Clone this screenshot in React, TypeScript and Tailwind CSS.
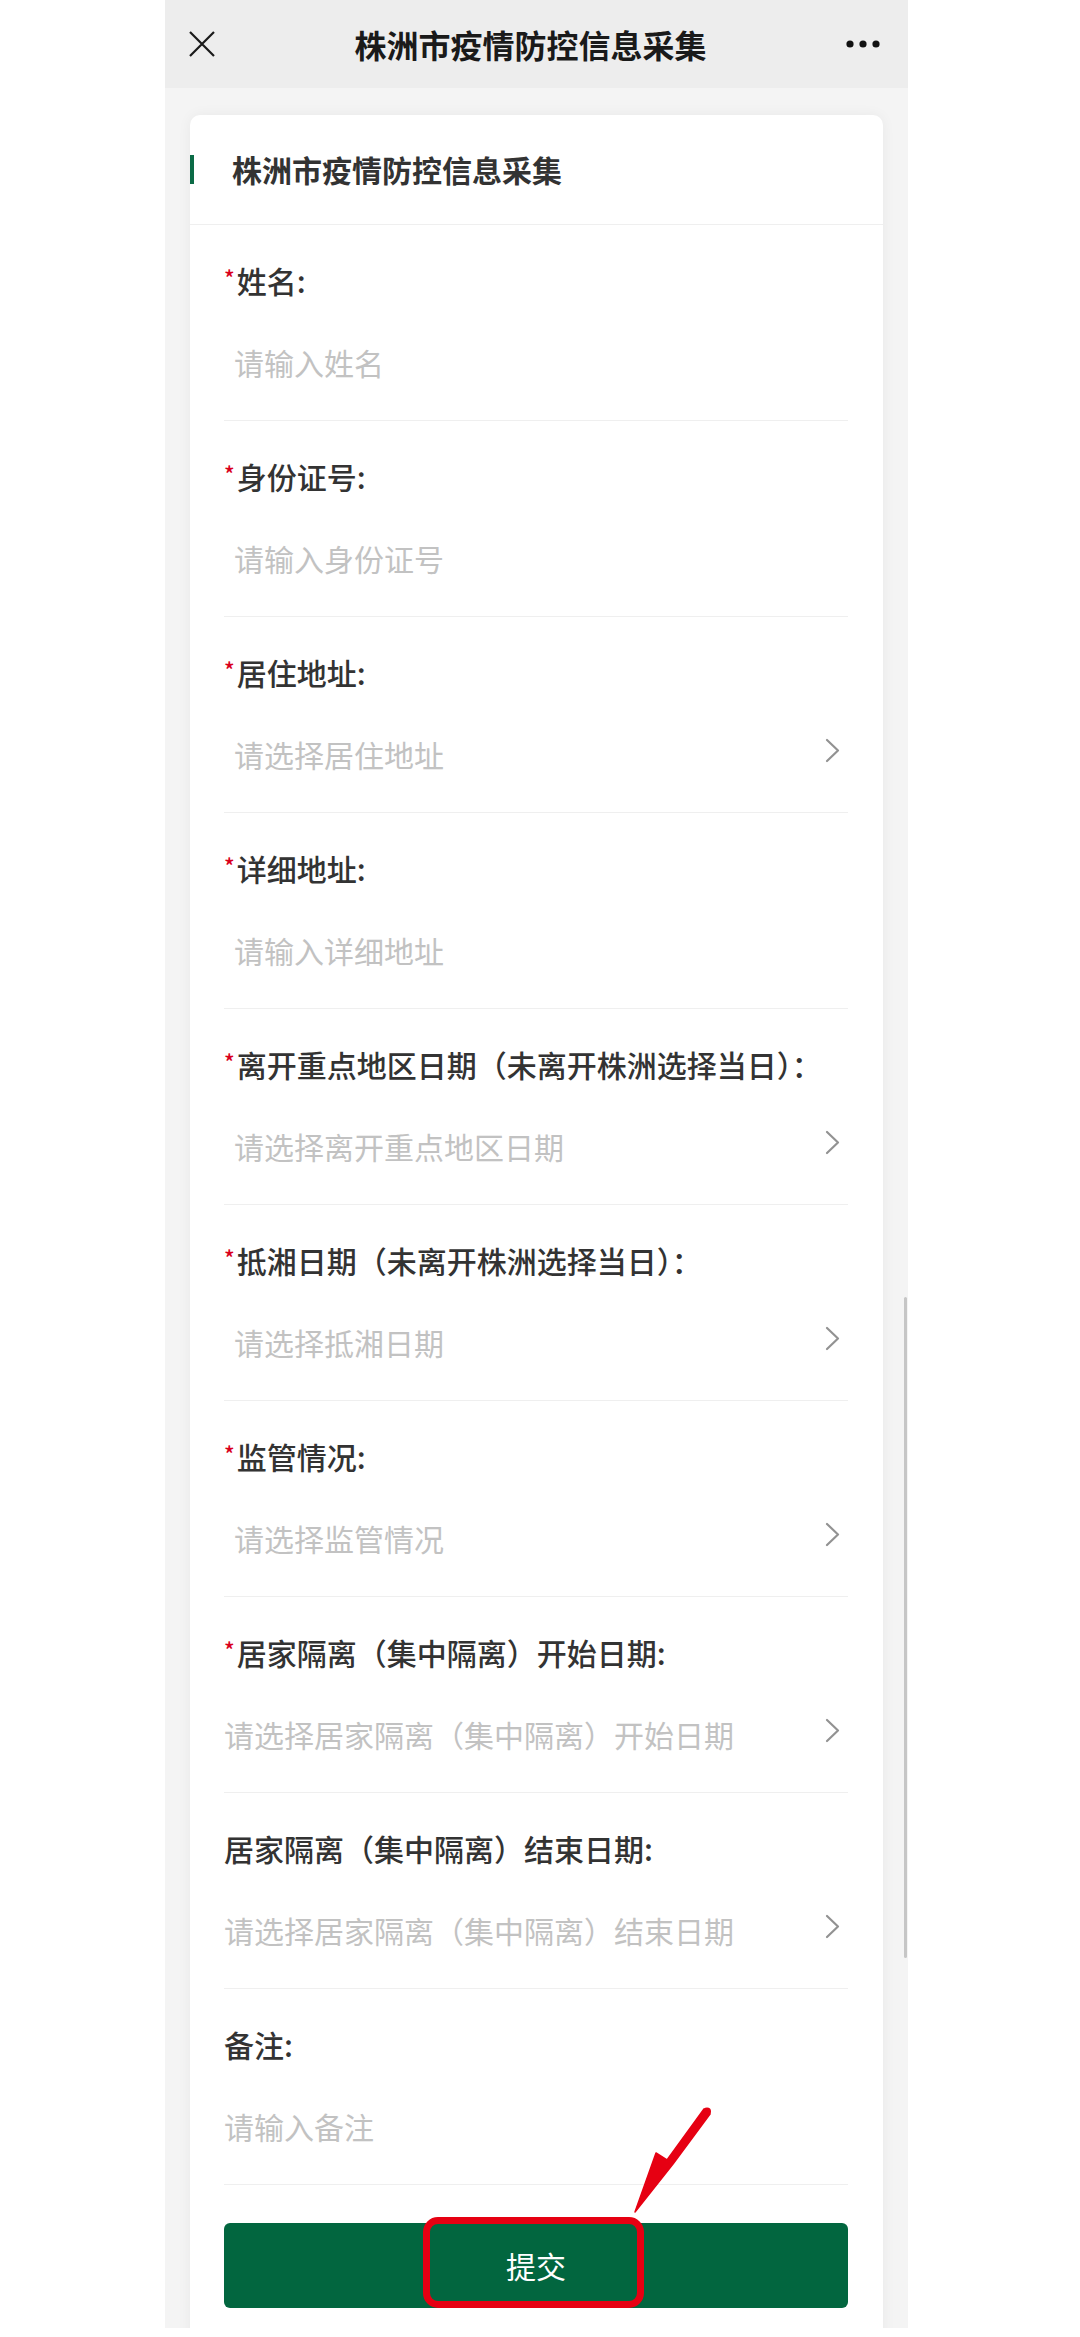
type Field = {
  label: string;
  placeholder: string;
  required?: boolean;
  select?: boolean;
  inset?: boolean;
};

const fields: Field[] = [
  { label: "姓名:", placeholder: "请输入姓名", required: true, inset: true },
  { label: "身份证号:", placeholder: "请输入身份证号", required: true, inset: true },
  { label: "居住地址:", placeholder: "请选择居住地址", required: true, select: true, inset: true },
  { label: "详细地址:", placeholder: "请输入详细地址", required: true, inset: true },
  {
    label: "离开重点地区日期（未离开株洲选择当日）：",
    placeholder: "请选择离开重点地区日期",
    required: true,
    select: true,
    inset: true,
  },
  {
    label: "抵湘日期（未离开株洲选择当日）：",
    placeholder: "请选择抵湘日期",
    required: true,
    select: true,
    inset: true,
  },
  { label: "监管情况:", placeholder: "请选择监管情况", required: true, select: true, inset: true },
  {
    label: "居家隔离（集中隔离）开始日期:",
    placeholder: "请选择居家隔离（集中隔离）开始日期",
    required: true,
    select: true,
  },
  {
    label: "居家隔离（集中隔离）结束日期:",
    placeholder: "请选择居家隔离（集中隔离）结束日期",
    select: true,
  },
  { label: "备注:", placeholder: "请输入备注" },
];

const font = { fontFamily: '"Noto Sans CJK SC", "Noto Sans", sans-serif' };

function Chevron() {
  return (
    <svg width="15" height="25" viewBox="0 0 15 25" className="-translate-y-[4px]">
      <path
        d="M2 2 L13 12.5 L2 23"
        fill="none"
        stroke="#929292"
        strokeWidth="2.2"
        strokeLinecap="round"
        strokeLinejoin="round"
      />
    </svg>
  );
}

function FormRow({ field }: { field: Field }) {
  return (
    <div className="h-[196px] border-b border-[#efefef] pt-[35px]">
      <div className="flex h-[40px] items-center text-[30px] leading-[40px] font-medium text-[#333]">
        {field.required && (
          <span className="mr-[2px] -translate-y-[3px] text-[22px] text-[#d9001b]">*</span>
        )}
        <span>{field.label}</span>
      </div>
      <div className="mt-[42px] flex h-[40px] items-center justify-between pr-[8px]">
        <span
          className={`text-[30px] leading-[40px] text-[#c2c2c2] ${field.inset ? "pl-[10px]" : ""}`}
        >
          {field.placeholder}
        </span>
        {field.select && <Chevron />}
      </div>
    </div>
  );
}

export default function App() {
  return (
    <div className="relative min-h-[2337px] w-full bg-white" style={font}>
      <div className="relative ml-[165px] h-[2328px] w-[743px] overflow-hidden bg-[#f4f4f4]">
        {/* top bar */}
        <div className="flex h-[88px] items-center justify-between bg-[#ededed] px-[24px]">
          <svg width="28" height="28" viewBox="0 0 28 28" className="ml-[-1px]">
            <path d="M2 2 L26 26 M26 2 L2 26" stroke="#1a1a1a" strokeWidth="2.2" />
          </svg>
          <h1 className="text-[32px] font-semibold text-[#1a1a1a]">株洲市疫情防控信息采集</h1>
          <svg width="36" height="10" viewBox="0 0 36 10" className="mr-[3px]">
            <circle cx="5" cy="5" r="3.6" fill="#111" />
            <circle cx="18" cy="5" r="3.6" fill="#111" />
            <circle cx="31" cy="5" r="3.6" fill="#111" />
          </svg>
        </div>

        {/* card */}
        <div className="mx-[25px] mt-[27px] rounded-[10px] bg-white pb-[40px] shadow-[0_0_14px_rgba(0,0,0,0.05)]">
          <div className="flex h-[110px] items-center border-b border-[#efefef]">
            <div className="h-[29px] w-[4px] bg-[#0b6b46]" />
            <h2 className="ml-[38px] text-[30px] font-bold text-[#333]">株洲市疫情防控信息采集</h2>
          </div>

          <div className="pl-[34px] pr-[35px]">
            {fields.map((f) => (
              <FormRow key={f.label} field={f} />
            ))}

            <button className="mt-[38px] flex h-[85px] w-full items-center justify-center rounded-[6px] bg-[#02663f] text-[30px] text-white">
              提交
            </button>
          </div>
        </div>

        {/* scrollbar */}
        <div className="absolute right-[1px] top-[1297px] h-[661px] w-[3px] rounded-full bg-[#c6c6c6]" />
      </div>

      {/* red annotation */}
      <div className="absolute left-[423px] top-[2217px] h-[91px] w-[221px] rounded-[15px] border-[7px] border-[#e60012]" />
      <svg
        className="absolute left-[600px] top-[2100px]"
        width="200"
        height="240"
        viewBox="0 0 200 240"
      >
        <polygon
          points="110,14 73,64 35,112 56,53 67,60 104,9"
          fill="#e60012"
          stroke="#e60012"
          strokeWidth="1.5"
          strokeLinejoin="round"
        />
        <circle cx="107" cy="11.5" r="4" fill="#e60012" />
      </svg>
    </div>
  );
}
